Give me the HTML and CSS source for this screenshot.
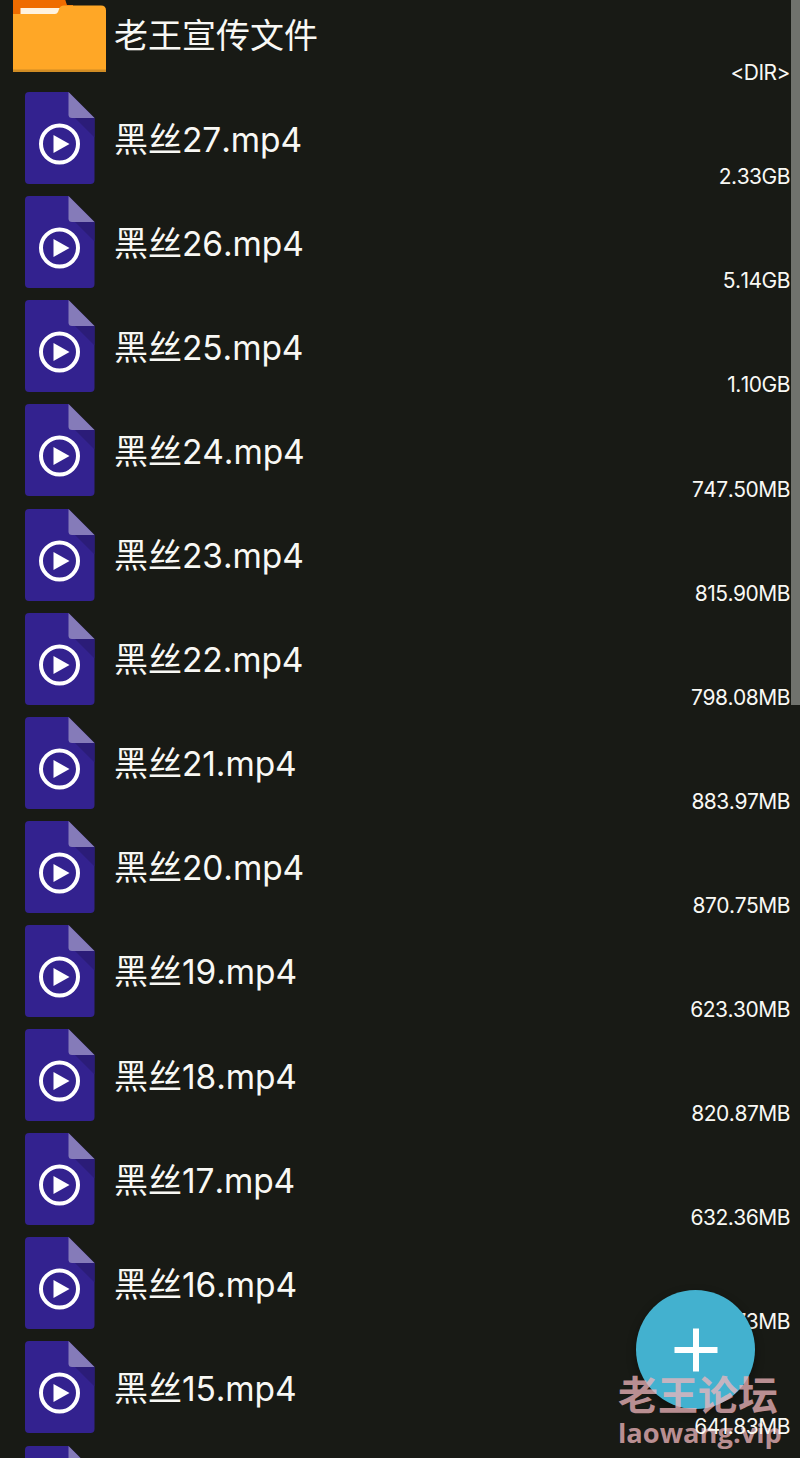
FILE: index.html
```html
<!DOCTYPE html>
<html lang="zh-CN">
<head>
    <meta charset="UTF-8">
    <meta name="viewport" content="width=device-width, initial-scale=1.0">
    <title>老王宣传文件</title>
    <link rel="stylesheet" href="styles.css">
</head>
<body>
    <!-- Shared icon for all video files -->
    <svg class="symbols" width="0" height="0">
        <symbol id="video" viewBox="0 0 70 92">
            <path d="M4 0H43.500L69.500 26V88a4 4 0 0 1-4 4H4a4 4 0 0 1-4-4V4a4 4 0 0 1 4-4z" fill="#33228f"/>
            <path d="M50 26H69.500V45.500z" fill="#2b1c78"/>
            <path d="M43.500 0L69.500 26H47a3.500 3.500 0 0 1-3.500-3.500z" fill="#857bb9"/>
            <circle cx="34.500" cy="52" r="18.500" fill="none" stroke="#fff" stroke-width="4"/>
            <path d="M28.500 43L44.500 52L28.500 61z" fill="#fff"/>
        </symbol>
    </svg>

    <div class="screen">
        <div class="file-list">
            <div class="row">
                <svg class="icon folder" viewBox="0 0 93 92">
                    <path d="M0 0H48Q51 15 54 23H60V60H0z" fill="#ef6c00"/>
                    <path d="M7.500 26H47V32H7.500z" fill="#fff3e0"/>
                    <path d="M0 32H42Q44 32 45 30L46.500 26Q47.500 23.500 51 23.500H88Q93 23.500 93 28.500V90H0z" fill="#ffa726"/>
                    <path d="M0 87.500H93V90H0z" fill="#d08c24"/>
                </svg>
                <div class="name">老王宣传文件</div>
                <div class="size">&lt;DIR&gt;</div>
            </div>
            <div class="row"><svg class="icon"><use href="#video"/></svg><div class="name">黑丝<span>27.mp4</span></div><div class="size">2.33GB</div></div>
            <div class="row"><svg class="icon"><use href="#video"/></svg><div class="name">黑丝<span>26.mp4</span></div><div class="size">5.14GB</div></div>
            <div class="row"><svg class="icon"><use href="#video"/></svg><div class="name">黑丝<span>25.mp4</span></div><div class="size">1.10GB</div></div>
            <div class="row"><svg class="icon"><use href="#video"/></svg><div class="name">黑丝<span>24.mp4</span></div><div class="size">747.50MB</div></div>
            <div class="row"><svg class="icon"><use href="#video"/></svg><div class="name">黑丝<span>23.mp4</span></div><div class="size">815.90MB</div></div>
            <div class="row"><svg class="icon"><use href="#video"/></svg><div class="name">黑丝<span>22.mp4</span></div><div class="size">798.08MB</div></div>
            <div class="row"><svg class="icon"><use href="#video"/></svg><div class="name">黑丝<span>21.mp4</span></div><div class="size">883.97MB</div></div>
            <div class="row"><svg class="icon"><use href="#video"/></svg><div class="name">黑丝<span>20.mp4</span></div><div class="size">870.75MB</div></div>
            <div class="row"><svg class="icon"><use href="#video"/></svg><div class="name">黑丝<span>19.mp4</span></div><div class="size">623.30MB</div></div>
            <div class="row"><svg class="icon"><use href="#video"/></svg><div class="name">黑丝<span>18.mp4</span></div><div class="size">820.87MB</div></div>
            <div class="row"><svg class="icon"><use href="#video"/></svg><div class="name">黑丝<span>17.mp4</span></div><div class="size">632.36MB</div></div>
            <div class="row"><svg class="icon"><use href="#video"/></svg><div class="name">黑丝<span>16.mp4</span></div><div class="size">648.73MB</div></div>
            <div class="row"><svg class="icon"><use href="#video"/></svg><div class="name">黑丝<span>15.mp4</span></div><div class="size top">641.83MB</div></div>
            <div class="row"><svg class="icon"><use href="#video"/></svg></div>
        </div>

        <div class="scrollbar"></div>

        <button class="add" aria-label="添加">
            <svg width="44" height="44" viewBox="0 0 44 44">
                <path d="M22 0.500V43.500M0.500 22H43.500" stroke="#fff" stroke-width="6"/>
            </svg>
        </button>

        <div class="watermark">
            <div class="forum">老王论坛</div>
            <div class="site">laowang.vip</div>
        </div>
    </div>
</body>
</html>
```
FILE: styles.css
```css
body {
    margin: 0;
    background-color: #181a15;
    color: #f8f8f4;
    font-family: "Noto Sans CJK SC", sans-serif;
}

.symbols {
    position: absolute;
}

.screen {
    position: relative;
    height: 1458px;
    overflow: hidden;
}

.file-list {
    margin-top: -18px;
}

.row {
    display: flex;
    height: 104.12px;
    padding: 0 10px 0 24.5px;
    box-sizing: border-box;
}

.icon {
    width: 70px;
    height: 92px;
    margin-top: 6px;
    flex-shrink: 0;
}

.icon.folder {
    width: 93px;
    height: 92px;
    margin: 0 -11.5px 0 -11.5px;
}

.name {
    margin-left: 19.5px;
    padding-top: 26.5px;
    font-size: 34px;
    line-height: 50px;
    white-space: nowrap;
}

.name span {
    font-family: "Inter", sans-serif;
    font-size: 33.5px;
    font-kerning: none;
    letter-spacing: -0.1px;
}

.size {
    margin-left: auto;
    align-self: flex-end;
    font-family: "Inter", sans-serif;
    font-size: 21px;
    font-kerning: none;
    letter-spacing: -0.5px;
    line-height: 26px;
}

.size.top {
    position: relative;
    z-index: 2;
}

.scrollbar {
    position: absolute;
    top: 0;
    right: 0;
    width: 9px;
    height: 705px;
    background-color: #70726d;
}

.add {
    position: absolute;
    left: 636px;
    top: 1290px;
    width: 119px;
    height: 119px;
    padding: 0;
    border: none;
    border-radius: 50%;
    background-color: #43b1cf;
    display: flex;
    align-items: center;
    justify-content: center;
    box-shadow: 0 4px 10px rgba(0, 0, 0, 0.4);
}

.watermark {
    position: absolute;
    left: 618px;
    top: 1369px;
    color: rgba(239, 182, 188, 0.75);
    font-weight: bold;
    white-space: nowrap;
}

.forum {
    font-size: 40px;
    line-height: 48px;
}

.site {
    font-family: "Open Sans", "Noto Sans", sans-serif;
    font-size: 27.3px;
    line-height: 32px;
}
```
